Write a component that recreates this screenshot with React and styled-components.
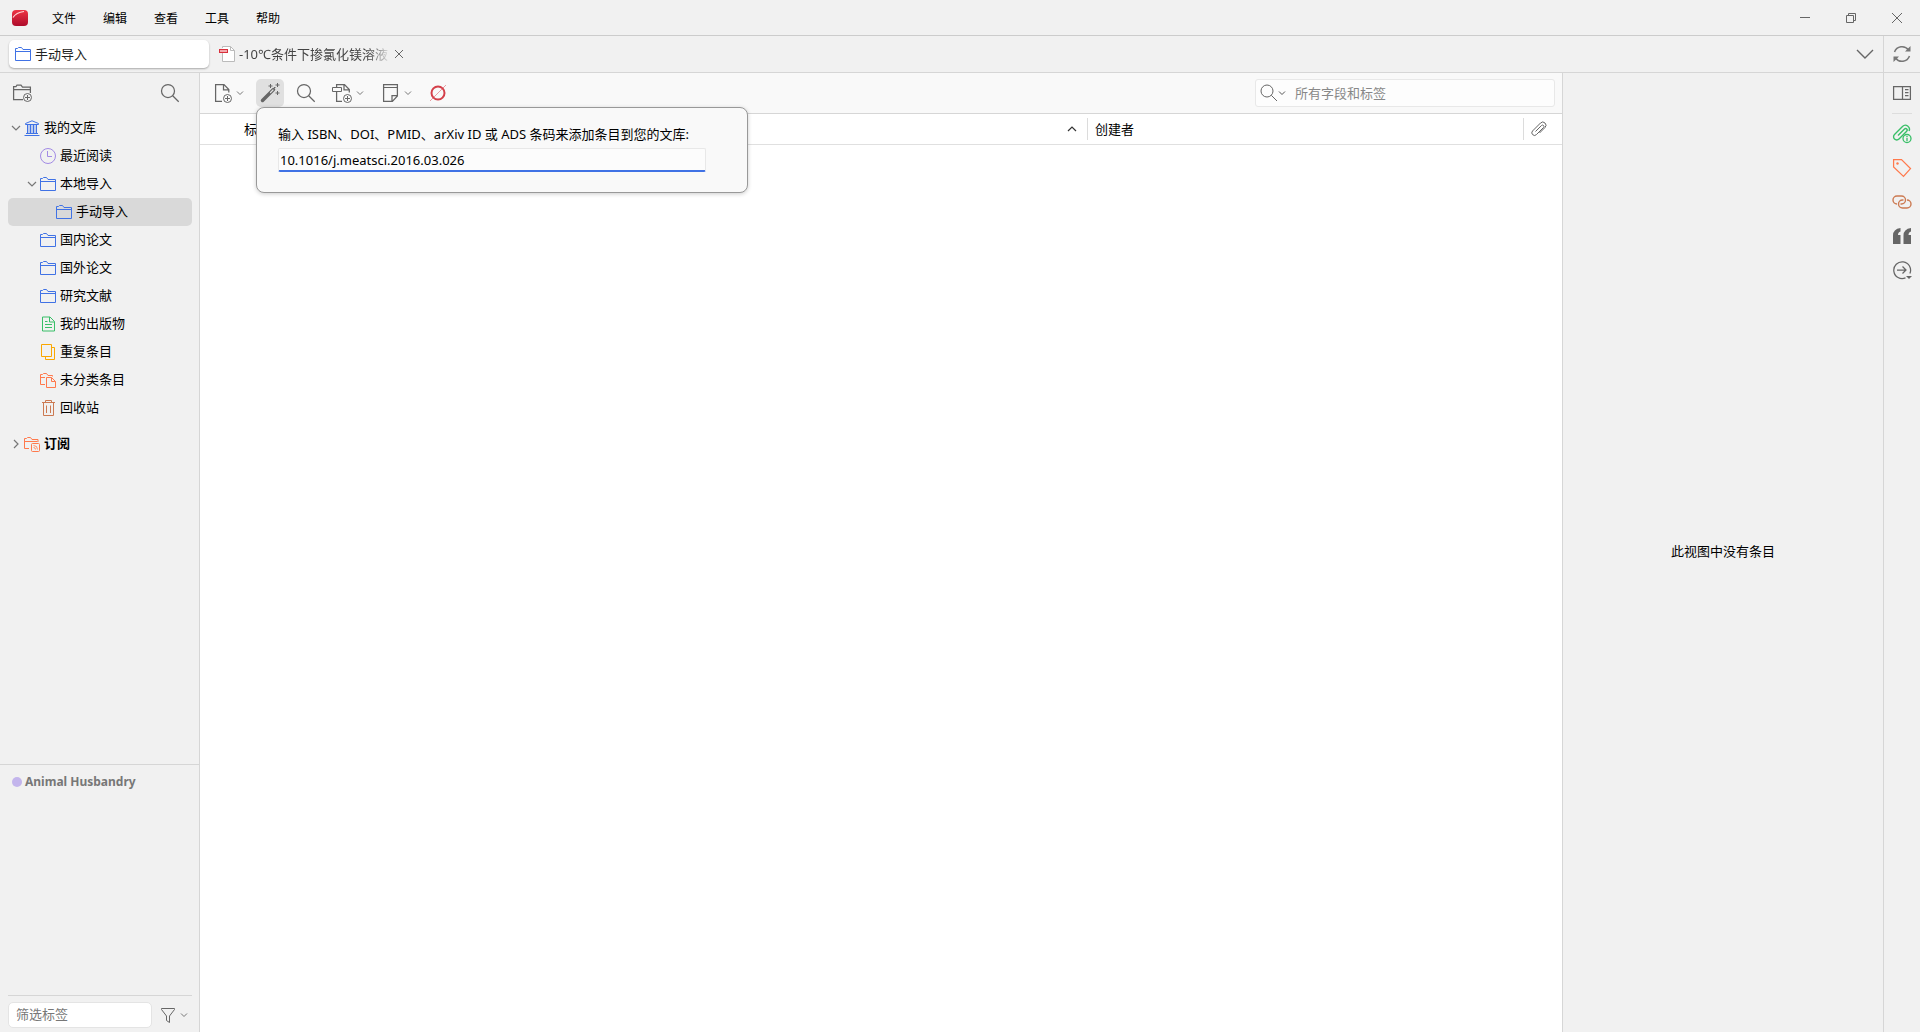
import React from "react";
import styled, { createGlobalStyle } from "styled-components";

const blue = "#4072e5";
const green = "#39bf68";
const orange = "#ff794c";
const brown = "#cc7a52";
const yellow = "#faa700";
const gray = "#666";

const Icon = ({ size = 16, color = gray, children }) => (
  <svg
    width={size}
    height={size}
    viewBox={`0 0 ${size} ${size}`}
    fill="none"
    stroke={color}
    aria-hidden="true"
  >
    {children}
  </svg>
);

const Chevron = ({ color = "#777" }) => (
  <Icon size={8} color={color}>
    <path d="M1 2.5l3 3 3-3" />
  </Icon>
);

const SortIcon = () => (
  <Icon size={10} color="#333">
    <path d="M1 7l4-4 4 4" strokeWidth="1.2" />
  </Icon>
);

const FolderIcon = () => (
  <Icon color={blue}>
    <path d="M.5 14.5v-12h2l1-1h3l1.5 2h7.5v11zM.5 5.5h15" />
  </Icon>
);

const LibraryIcon = () => (
  <Icon color={blue}>
    <path d="M1.5 4.500V3.500L8 .8l6.500 2.700v1zM.5 15.500h15M2 13.500h12M3.500 5v8.500M6.500 5v8.500M9.500 5v8.500M12.500 5v8.500" />
    <path d="M5 5v8.500M8 5v8.500M11 5v8.500" strokeWidth=".6" />
  </Icon>
);

const ClockIcon = () => (
  <Icon color="#a28ae5">
    <circle cx="8" cy="8" r="7.5" />
    <path d="M7.5 3v5.500h4.500" />
  </Icon>
);

const PublicationsIcon = () => (
  <Icon color={green}>
    <path d="M2.5 1v14h12V5.500L10 1zM9.500 1v5h5M5 5.500h2.500M5 8.500h7M5 11.500h7" />
  </Icon>
);

const DuplicatesIcon = () => (
  <Icon color={yellow}>
    <path d="M1.5.5h10v12h-10zM11.500 3.500h3v12h-9v-3" />
  </Icon>
);

const UnfiledIcon = () => (
  <Icon color={orange}>
    <path d="M5 12.500H.5v-10h2l1-1h3l1.500 2h4.500v1M.5 5.500H5M6.500 5.500h5l4 4v6h-9zM11.500 5.500v4h4" />
  </Icon>
);

const TrashIcon = () => (
  <Icon color={brown}>
    <path d="M2 2.500h13M5.500 2.500v-2h6v2M3.500 3v12.500h10V3M6.500 5.500v7.500M10.500 5.500v7.500" />
  </Icon>
);

const FeedsIcon = () => (
  <Icon color={orange}>
    <path d="M5 12.500H.5v-10h2l1-1h3l1.500 2h6V6M.5 5.500h13" />
    <rect x="7.5" y="7.5" width="8" height="8" rx="1" />
    <path d="M9.500 11.500a2 2 0 0 1 2 2M9.500 9.500a4 4 0 0 1 4 4" strokeWidth=".8" />
  </Icon>
);

const SearchIcon = () => (
  <Icon size={20}>
    <circle cx="8" cy="8" r="6.5" strokeWidth="1.25" />
    <path d="M12.700 12.700l6 6" strokeWidth="1.25" />
  </Icon>
);

const SmallSearchIcon = () => (
  <Icon size={18}>
    <circle cx="7" cy="7" r="6" />
    <path d="M11.300 11.300l5.700 5.700" />
  </Icon>
);

const NewCollectionIcon = () => (
  <Icon size={20}>
    <path
      d="M11 16.500H1.600V3.500h2.400l1-1.500h4l1.500 2h7.900v6M1.600 6.500h16.800"
      strokeWidth="1.25"
    />
    <circle cx="15.500" cy="14.500" r="4" />
    <path d="M15.500 12v5M13 14.500h5" />
  </Icon>
);

const NewItemIcon = () => (
  <Icon size={20}>
    <path
      d="M10 18.400H3.600V1.600h8.400l4.800 5V9.500M11.500 1.600v5.200H17"
      strokeWidth="1.25"
    />
    <circle cx="15.500" cy="15.500" r="4" />
    <path d="M15.500 13v5M13 15.500h5" />
  </Icon>
);

const WandIcon = () => (
  <Icon size={20}>
    <path d="M2.500 17.500L13.500 6.500" strokeWidth="3.5" strokeLinecap="round" />
    <path d="M10.500 9.500l2.500-2.500" stroke="#e0e0e0" strokeWidth="1.2" strokeLinecap="round" />
    <path d="M10.500 1v4M8.500 3h4M17.500 0v4M15.500 2h4M17.500 8v4M15.500 10h4" />
    <path d="M14 4.500h1.500" />
  </Icon>
);

const AddAttachmentIcon = () => (
  <Icon size={20}>
    <path
      d="M10 18.400H4.600V8.500M4.600 4V1.600h7.900l4.800 5v2.900M12 1.600v5.200h5.500"
      strokeWidth="1.25"
    />
    <path d="M.5 4.500h9v4h-9z" />
    <circle cx="15.500" cy="15.500" r="4" />
    <path d="M15.500 13v5M13 15.500h5" />
  </Icon>
);

const NoteIcon = () => (
  <Icon size={20}>
    <path
      d="M3.600 1.600h13.800v11.400l-5 5.400H3.600zM12 18v-5.500h5.500"
      strokeWidth="1.25"
    />
    <path d="M3.600 4.500h13.800" />
  </Icon>
);

const RingIcon = () => (
  <Icon size={20} color="#d4404a">
    <circle cx="10" cy="10" r="6.5" strokeWidth="2" />
    <path d="M2 18L18 2" strokeWidth=".7" opacity=".7" />
  </Icon>
);

const PdfIcon = () => (
  <Icon color="#bbb">
    <path d="M3.500 7v8.500h12V4.500l-4-4h-8V2M11.500 .5v4h4" fill="#fff" />
    <rect x=".5" y="3.5" width="8" height="3" fill="#f3a9ae" stroke="#d9303c" />
  </Icon>
);

const PaperclipIcon = () => (
  <Icon>
    <path d="M4.500 10.500l6-6a1.400 1.400 0 0 1 2 2l-7 7a2.500 2.500 0 0 1-4-3.500L9.500 2a3 3 0 0 1 4.500 4.500L8.500 12" />
  </Icon>
);

const SyncIcon = () => (
  <Icon size={20} color="#777">
    <path d="M2.500 8a8 8 0 0 1 14-2M17.500 12a8 8 0 0 1-14 2" strokeWidth="1.5" />
    <path d="M18.500 2v5.500H13zM1.500 18v-5.500H7z" fill="#777" stroke="none" />
  </Icon>
);

const SidebarIcon = () => (
  <Icon size={20}>
    <path
      d="M1.600 3.600h16.800v12.800H1.600zM10.500 3.600v12.800M13 6.500h3.500M13 9.500h3.500M13 12.500h3.500"
      strokeWidth="1.25"
    />
  </Icon>
);

const AttachmentInfoIcon = () => (
  <Icon size={20} color={green}>
    <path
      d="M6 11.500l6.500-6.500a1.500 1.500 0 0 1 2.200 2.200L7 15a3 3 0 0 1-4.500-4.500L10.500 2.500a4 4 0 0 1 6.500 4.500"
      strokeWidth="1.4"
    />
    <circle cx="15" cy="14.500" r="4" strokeWidth="1.3" />
    <path d="M15 12v1.200M15 14v3" strokeWidth="1.3" />
  </Icon>
);

const TagIcon = () => (
  <Icon size={20} color={orange}>
    <path d="M1.600 1.600h7.900l9 9-7 7.800-9.900-9.400z" strokeWidth="1.25" />
    <circle cx="5.500" cy="5.500" r="1.2" fill={orange} stroke="none" />
  </Icon>
);

const RelatedIcon = () => (
  <Icon size={20} color={brown}>
    <path
      d="M5 12a4 4 0 0 1 0-8h4.500a4 4 0 0 1 0 8h-1M15 8a4 4 0 0 1 0 8h-4.500a4 4 0 0 1 0-8h1"
      strokeWidth="1.4"
    />
  </Icon>
);

const QuoteIcon = () => (
  <Icon size={20}>
    <path
      d="M8.500 2v3.500Q6 6 6 9h2.500v9H1V9.500Q1 3 8.500 2zM19 2v3.500Q16.500 6 16.500 9H19v9h-7.500V9.500Q11.500 3 19 2z"
      fill={gray}
      stroke="none"
    />
  </Icon>
);

const LocateIcon = () => (
  <Icon size={20}>
    <path
      d="M17.900 13.500A8.400 8.400 0 1 0 13.500 17.900M5 10h9M10.500 6.500L14 10l-3.500 3.500"
      strokeWidth="1.25"
    />
    <path d="M14 16h6l-3 3z" fill={gray} stroke="none" />
  </Icon>
);

const FunnelIcon = () => (
  <Icon>
    <path d="M1.500 1.500h13v1L9.500 9v6.500l-3-2V9l-5-6.500z" />
  </Icon>
);

const LogoIcon = () => (
  <Icon>
    <defs>
      <linearGradient id="logo" x1="0" y1="0" x2="0" y2="1">
        <stop offset="0" stopColor="#ee3444" />
        <stop offset="1" stopColor="#ae0c2b" />
      </linearGradient>
    </defs>
    <rect width="16" height="16" rx="4" fill="url(#logo)" stroke="none" />
    <path d="M1 7.500Q4 2.500 12 1.500" stroke="#ffd5d5" strokeWidth="1.2" />
  </Icon>
);

const menus = ["文件", "编辑", "查看", "工具", "帮助"];

const collections = [
  { title: "我的文库", icon: <LibraryIcon />, level: 0, open: true },
  { title: "最近阅读", icon: <ClockIcon />, level: 1 },
  { title: "本地导入", icon: <FolderIcon />, level: 1, open: true },
  { title: "手动导入", icon: <FolderIcon />, level: 2, selected: true },
  { title: "国内论文", icon: <FolderIcon />, level: 1 },
  { title: "国外论文", icon: <FolderIcon />, level: 1 },
  { title: "研究文献", icon: <FolderIcon />, level: 1 },
  { title: "我的出版物", icon: <PublicationsIcon />, level: 1 },
  { title: "重复条目", icon: <DuplicatesIcon />, level: 1 },
  { title: "未分类条目", icon: <UnfiledIcon />, level: 1 },
  { title: "回收站", icon: <TrashIcon />, level: 1 },
];

const sections = [
  { title: "附件信息", icon: <AttachmentInfoIcon /> },
  { title: "标签", icon: <TagIcon /> },
  { title: "相关", icon: <RelatedIcon /> },
  { title: "引用", icon: <QuoteIcon /> },
  { title: "定位", icon: <LocateIcon /> },
];

const Twisty = ({ open }) => (
  <Icon color="#777">
    <path d={open ? "M4 6l4 4 4-4" : "M6 4l4 4-4 4"} strokeWidth="1.2" />
  </Icon>
);

const TitleBar = () => (
  <TitleWrapper>
    <LogoIcon />
    <Menu>
      {menus.map((menu) => (
        <MenuButton key={menu} type="button">
          {menu}
        </MenuButton>
      ))}
    </Menu>
    <WindowButton type="button" aria-label="最小化">
      <Icon size={12}>
        <path d="M1 5.500h10" />
      </Icon>
    </WindowButton>
    <WindowButton type="button" aria-label="还原">
      <Icon size={12}>
        <path d="M1.500 3.500h7v7h-7zM3.500 3.500v-2h7v7h-2" />
      </Icon>
    </WindowButton>
    <WindowButton type="button" aria-label="关闭">
      <Icon size={12}>
        <path d="M1 1l10 10M11 1L1 11" />
      </Icon>
    </WindowButton>
  </TitleWrapper>
);

const TabBar = () => (
  <TabWrapper>
    <Tabs>
      <Tab type="button" $selected>
        <FolderIcon />
        <span>手动导入</span>
      </Tab>
      <TabItem>
        <Tab type="button">
          <PdfIcon />
          <TabName>-10℃条件下掺氯化镁溶液</TabName>
        </Tab>
        <CloseButton type="button" aria-label="关闭标签页">
          <Icon size={10}>
            <path d="M1 1l8 8M9 1L1 9" />
          </Icon>
        </CloseButton>
      </TabItem>
    </Tabs>
    <TabsMenuButton type="button" aria-label="列出所有标签页">
      <Icon size={20}>
        <path d="M2 6l8 8 8-8" strokeWidth="1.4" />
      </Icon>
    </TabsMenuButton>
    <SyncButton type="button" aria-label="同步">
      <SyncIcon />
    </SyncButton>
  </TabWrapper>
);

const Sidebar = () => (
  <SidebarWrapper>
    <SidebarTools>
      <ToolButton type="button" aria-label="新建分类">
        <NewCollectionIcon />
      </ToolButton>
      <ToolButton type="button" aria-label="筛选分类">
        <SearchIcon />
      </ToolButton>
    </SidebarTools>
    <Tree>
      {collections.map((item) => (
        <TreeRow key={item.title} type="button" $level={item.level} $selected={item.selected}>
          <TwistySlot>{item.open && <Twisty open />}</TwistySlot>
          {item.icon}
          <TreeLabel>{item.title}</TreeLabel>
        </TreeRow>
      ))}
      <FeedsRow type="button" $level={0}>
        <TwistySlot>
          <Twisty />
        </TwistySlot>
        <FeedsIcon />
        <TreeLabel>订阅</TreeLabel>
      </FeedsRow>
    </Tree>
    <TagPanel>
      <TagButton type="button">
        <TagDot />
        Animal Husbandry
      </TagButton>
      <TagFilter>
        <FilterInput type="text" placeholder="筛选标签" aria-label="筛选标签" />
        <FilterButton type="button" aria-label="标签选项">
          <FunnelIcon />
          <Chevron />
        </FilterButton>
      </TagFilter>
    </TagPanel>
  </SidebarWrapper>
);

const Toolbar = () => (
  <ToolbarWrapper>
    <ToolButton type="button" aria-label="新建条目">
      <NewItemIcon />
      <Chevron />
    </ToolButton>
    <LookupAnchor>
      <ToolButton type="button" aria-label="通过标识符添加条目" $active>
        <WandIcon />
      </ToolButton>
      <Popup>
        <label htmlFor="identifier">
          输入 ISBN、DOI、PMID、arXiv ID 或 ADS 条码来添加条目到您的文库:
        </label>
        <IdentifierInput id="identifier" type="text" defaultValue="10.1016/j.meatsci.2016.03.026" />
      </Popup>
    </LookupAnchor>
    <ToolButton type="button" aria-label="查找">
      <SearchIcon />
    </ToolButton>
    <ToolButton type="button" aria-label="添加附件">
      <AddAttachmentIcon />
      <Chevron />
    </ToolButton>
    <ToolButton type="button" aria-label="新建笔记">
      <NoteIcon />
      <Chevron />
    </ToolButton>
    <ToolButton type="button" aria-label="插件">
      <RingIcon />
    </ToolButton>
    <SearchBox>
      <SearchMode type="button" aria-label="搜索模式">
        <SmallSearchIcon />
        <Chevron color="#555" />
      </SearchMode>
      <SearchInput type="text" placeholder="所有字段和标签" aria-label="所有字段和标签" />
    </SearchBox>
  </ToolbarWrapper>
);

const ItemsPane = () => (
  <Items>
    <Toolbar />
    <ItemsTable>
      <thead>
        <tr>
          <HeadCell $width="auto">
            <HeadContent $indent>
              标题
              <SortIcon />
            </HeadContent>
          </HeadCell>
          <HeadCell $width="436px">
            <HeadContent $divider>创建者</HeadContent>
          </HeadCell>
          <HeadCell $width="39px">
            <HeadContent $divider>
              <PaperclipIcon />
            </HeadContent>
          </HeadCell>
        </tr>
      </thead>
    </ItemsTable>
  </Items>
);

const App = () => {
  return (
    <>
      <GlobalStyle />
      <Window>
        <TitleBar />
        <TabBar />
        <Main>
          <Sidebar />
          <ItemsPane />
          <Details>此视图中没有条目</Details>
          <Rail>
            <RailButton type="button" aria-label="切换条目窗格">
              <SidebarIcon />
            </RailButton>
            <RailDivider />
            {sections.map((section) => (
              <RailButton key={section.title} type="button" aria-label={section.title}>
                {section.icon}
              </RailButton>
            ))}
          </Rail>
        </Main>
      </Window>
    </>
  );
};

export default App;

const GlobalStyle = createGlobalStyle`
  * {
    box-sizing: border-box;
  }
  body {
    margin: 0;
    font-family: "Noto Sans", "Noto Sans CJK SC", sans-serif;
    font-size: 13px;
    line-height: 20px;
    color: #000;
    background: #f1f1f1;
  }
  button, input {
    margin: 0;
    padding: 0;
    border: none;
    background: transparent;
    font: inherit;
    color: inherit;
  }
  svg {
    display: block;
    flex-shrink: 0;
  }
`;

const Window = styled.div`
  display: flex;
  flex-direction: column;
  height: 100vh;
  overflow: hidden;
`;

const TitleWrapper = styled.header`
  display: flex;
  align-items: center;
  height: 36px;
  padding-left: 12px;
  border-bottom: 1px solid #ccc;
`;

const Menu = styled.nav`
  display: flex;
  flex: 1;
  gap: 3px;
  padding-left: 12px;
`;

const MenuButton = styled.button`
  padding: 2px 12px 0;
  font-size: 12px;
`;

const WindowButton = styled.button`
  display: flex;
  align-items: center;
  justify-content: center;
  width: 46px;
  height: 35px;
`;

const TabWrapper = styled.div`
  display: flex;
  height: 37px;
  border-bottom: 1px solid #d6d6d6;
`;

const Tabs = styled.div`
  display: flex;
  align-items: center;
  flex: 1;
  gap: 4px;
  padding-left: 9px;
`;

const TabItem = styled.div`
  display: flex;
  align-items: center;
  width: 200px;
`;

const Tab = styled.button`
  display: flex;
  align-items: center;
  gap: 4px;
  width: ${({ $selected }) => ($selected ? "200px" : "auto")};
  height: 28px;
  padding-left: 6px;
  border-radius: 5px;
  color: ${({ $selected }) => ($selected ? "#222" : "#444")};
  background: ${({ $selected }) => ($selected ? "#fff" : "transparent")};
  box-shadow: ${({ $selected }) => ($selected ? "0 1px 2px rgba(0, 0, 0, 0.3)" : "none")};
`;

const TabName = styled.span`
  width: 152px;
  overflow: hidden;
  text-align: left;
  white-space: nowrap;
  mask-image: linear-gradient(to right, #000 85%, transparent 100%);
`;

const CloseButton = styled.button`
  display: flex;
  align-items: center;
  justify-content: center;
  width: 16px;
  height: 16px;
`;

const TabsMenuButton = styled.button`
  display: flex;
  align-items: center;
  justify-content: center;
  width: 36px;
`;

const SyncButton = styled.button`
  display: flex;
  align-items: center;
  justify-content: center;
  width: 37px;
  border-left: 1px solid #d6d6d6;
`;

const Main = styled.main`
  display: flex;
  flex: 1;
  min-height: 0;
`;

const SidebarWrapper = styled.aside`
  display: flex;
  flex-direction: column;
  width: 200px;
  border-right: 1px solid #d6d6d6;
`;

const SidebarTools = styled.div`
  display: flex;
  align-items: center;
  justify-content: space-between;
  height: 41px;
  padding: 0 15px 1px 8px;
`;

const Tree = styled.div`
  flex: 1;
  padding: 0 7px 0 8px;
`;

const TreeRow = styled.button`
  display: flex;
  align-items: center;
  gap: 4px;
  width: 100%;
  height: 28px;
  padding-left: ${({ $level }) => $level * 16}px;
  border-radius: 5px;
  background: ${({ $selected }) => ($selected ? "#d9d9d9" : "transparent")};
`;

const TreeLabel = styled.span`
  padding-bottom: 2px;
`;

const FeedsRow = styled(TreeRow)`
  margin-top: 8px;
  font-weight: bold;
`;

const TwistySlot = styled.span`
  width: 16px;
  margin-right: -4px;
`;

const TagPanel = styled.section`
  display: flex;
  flex-direction: column;
  align-items: stretch;
  justify-content: space-between;
  height: 268px;
  padding: 7px 7px 0 8px;
  border-top: 1px solid #d6d6d6;
`;

const TagButton = styled.button`
  display: flex;
  align-items: center;
  gap: 3px;
  padding-left: 4px;
  font-size: 12px;
  font-weight: bold;
  color: #777;
`;

const TagDot = styled.span`
  width: 10px;
  height: 10px;
  border-radius: 50%;
  background: #c3b5ec;
`;

const TagFilter = styled.div`
  display: flex;
  align-items: center;
  gap: 8px;
  height: 37px;
  padding-top: 2px;
  border-top: 1px solid #d6d6d6;
`;

const FilterInput = styled.input`
  flex: 1;
  min-width: 0;
  height: 26px;
  padding: 0 7px 2px;
  border: 1px solid #e4e4e4;
  border-radius: 5px;
  background: #fff;

  &::placeholder {
    color: #777;
    opacity: 1;
  }
`;

const FilterButton = styled.button`
  display: flex;
  align-items: center;
  gap: 4px;
  padding-right: 4px;
`;

const Items = styled.section`
  display: flex;
  flex-direction: column;
  flex: 1;
  background: #fff;
  border-right: 1px solid #d6d6d6;
`;

const ToolbarWrapper = styled.div`
  display: flex;
  align-items: center;
  gap: 8px;
  height: 41px;
  padding: 0 7px 0 8px;
  background: #f9f9f9;
  border-bottom: 1px solid #d6d6d6;
`;

const ToolButton = styled.button`
  display: flex;
  align-items: center;
  gap: 4px;
  height: 28px;
  padding: 0 4px;
  border-radius: 5px;
  background: ${({ $active }) => ($active ? "#e0e0e0" : "transparent")};
`;

const LookupAnchor = styled.div`
  position: relative;
`;

const Popup = styled.div`
  position: absolute;
  top: 100%;
  left: 0;
  z-index: 1;
  display: flex;
  flex-direction: column;
  gap: 4px;
  width: 492px;
  padding: 16px 41px 20px 21px;
  border: 1px solid #999;
  border-radius: 8px;
  background: #f9f9f9;
  box-shadow: 0 1px 4px rgba(0, 0, 0, 0.2);
  white-space: nowrap;
`;

const IdentifierInput = styled.input`
  height: 24px;
  padding: 0 1px;
  border: 1px solid #e8e8e8;
  border-bottom: 2px solid ${blue};
  border-radius: 2px;
  background: #fcfcfc;
  outline: none;
`;

const SearchBox = styled.div`
  display: flex;
  align-items: center;
  width: 300px;
  height: 28px;
  margin-left: auto;
  padding-left: 4px;
  border: 1px solid #e8e8e8;
  border-radius: 3px;
  background: #fdfdfd;
`;

const SearchMode = styled.button`
  display: flex;
  align-items: center;
`;

const SearchInput = styled.input`
  flex: 1;
  min-width: 0;
  padding-left: 9px;
  outline: none;

  &::placeholder {
    color: #888;
    opacity: 1;
  }
`;

const ItemsTable = styled.table`
  width: 100%;
  table-layout: fixed;
  border-spacing: 0;
`;

const HeadCell = styled.th`
  width: ${({ $width }) => $width};
  height: 31px;
  padding: 0;
  border-bottom: 1px solid #e0e0e0;
  font-weight: normal;
  text-align: left;
`;

const HeadContent = styled.div`
  display: flex;
  align-items: center;
  justify-content: space-between;
  height: 22px;
  padding: 0 10px 0 ${({ $indent }) => ($indent ? "44px" : "7px")};
  border-left: ${({ $divider }) => ($divider ? "1px solid #dcdcdc" : "none")};
`;

const Details = styled.section`
  display: flex;
  align-items: center;
  justify-content: center;
  width: 320px;
  padding-bottom: 4px;
`;

const Rail = styled.nav`
  display: flex;
  flex-direction: column;
  align-items: center;
  width: 37px;
  padding-top: 6px;
  border-left: 1px solid #d6d6d6;
`;

const RailButton = styled.button`
  display: flex;
  align-items: center;
  justify-content: center;
  width: 28px;
  height: 28px;
  margin-bottom: 6px;
`;

const RailDivider = styled.span`
  width: 20px;
  height: 1px;
  margin-bottom: 6px;
  background: #ddd;
`;
